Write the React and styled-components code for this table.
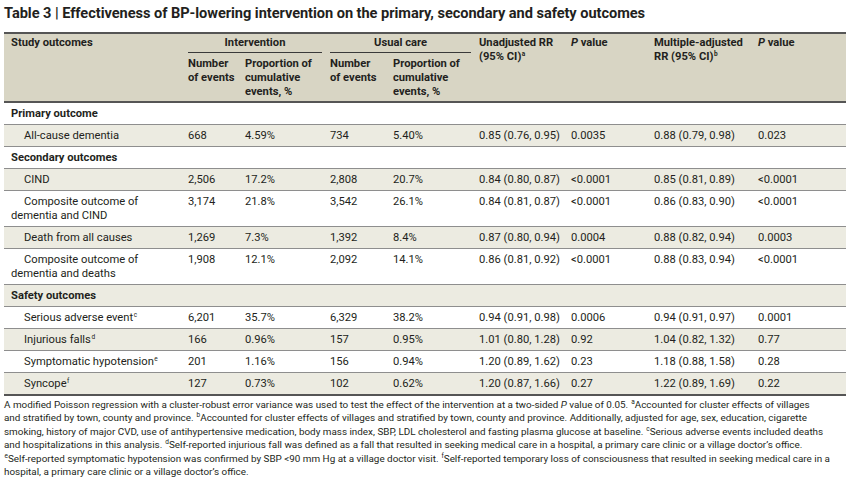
import React from "react";
import styled, { createGlobalStyle } from "styled-components";

const GlobalStyle = createGlobalStyle`
  html, body {
    margin: 0;
    padding: 0;
    background: #ffffff;
  }
  body {
    font-family: Roboto, "Liberation Sans", sans-serif;
    color: #231f20;
  }
`;

const Page = styled.div`
  width: 850px;
  padding: 4px 4px 0 4px;
  box-sizing: border-box;
`;

const Title = styled.h1`
  margin: 0 0 10px;
  font-size: 14.6px;
  line-height: 18px;
  font-weight: 700;
  letter-spacing: -0.05px;
  white-space: nowrap;
`;

const Table = styled.table`
  width: 842px;
  border-collapse: collapse;
  table-layout: fixed;
  border-top: 2px solid #555555;
  border-bottom: 2px solid #555555;
  font-size: 11.2px;
  line-height: 14px;
`;

const Head = styled.thead`
  background: #d8d5c4;
  border-bottom: 2px solid #555555;
`;

const Th = styled.th`
  text-align: left;
  vertical-align: top;
  font-weight: 700;
  padding: ${(p) => (p.$low ? "4px 0 2px 7px" : "2px 0 2px 7px")};
  white-space: nowrap;
`;

const SpanTh = styled.th`
  font-weight: 700;
  padding: 2px 1px 0 7px;
  vertical-align: top;
`;

const SpanLabel = styled.div`
  text-align: center;
  border-bottom: 1px solid #3a3a3a;
  padding-bottom: 2px;
`;

const Body = styled.tbody`
  tr:nth-child(even) {
    background: #ecebe1;
  }
  tr + tr {
    border-top: 1px solid #8e8e8e;
  }
`;

const GroupCell = styled.td`
  font-weight: 700;
  padding: 4px 7px 3px;
`;

const LabelCell = styled.td`
  padding: 4px 7px 3px;
  vertical-align: top;
  white-space: nowrap;
`;

const Indent = styled.span`
  display: inline-block;
  width: 13px;
`;

const Td = styled.td`
  padding: 4px 0 3px 7px;
  vertical-align: top;
  white-space: nowrap;
`;

const Sup = styled.sup`
  font-size: 6.5px;
  line-height: 0;
  vertical-align: 4px;
  margin-left: 0.5px;
`;

const Notes = styled.div`
  margin-top: 2px;
  font-size: 9.9px;
  line-height: 13.4px;
`;

const NoteLine = styled.div`
  white-space: nowrap;
`;

const rows = [
  { group: "Primary outcome" },
  { label: ["All-cause dementia"], v: ["668", "4.59%", "734", "5.40%", "0.85 (0.76, 0.95)", "0.0035", "0.88 (0.79, 0.98)", "0.023"] },
  { group: "Secondary outcomes" },
  { label: ["CIND"], v: ["2,506", "17.2%", "2,808", "20.7%", "0.84 (0.80, 0.87)", "<0.0001", "0.85 (0.81, 0.89)", "<0.0001"] },
  { label: ["Composite outcome of", "dementia and CIND"], v: ["3,174", "21.8%", "3,542", "26.1%", "0.84 (0.81, 0.87)", "<0.0001", "0.86 (0.83, 0.90)", "<0.0001"] },
  { label: ["Death from all causes"], v: ["1,269", "7.3%", "1,392", "8.4%", "0.87 (0.80, 0.94)", "0.0004", "0.88 (0.82, 0.94)", "0.0003"] },
  { label: ["Composite outcome of", "dementia and deaths"], v: ["1,908", "12.1%", "2,092", "14.1%", "0.86 (0.81, 0.92)", "<0.0001", "0.88 (0.83, 0.94)", "<0.0001"] },
  { group: "Safety outcomes" },
  { label: ["Serious adverse event"], sup: "c", v: ["6,201", "35.7%", "6,329", "38.2%", "0.94 (0.91, 0.98)", "0.0006", "0.94 (0.91, 0.97)", "0.0001"] },
  { label: ["Injurious falls"], sup: "d", v: ["166", "0.96%", "157", "0.95%", "1.01 (0.80, 1.28)", "0.92", "1.04 (0.82, 1.32)", "0.77"] },
  { label: ["Symptomatic hypotension"], sup: "e", v: ["201", "1.16%", "156", "0.94%", "1.20 (0.89, 1.62)", "0.23", "1.18 (0.88, 1.58)", "0.28"] },
  { label: ["Syncope"], sup: "f", v: ["127", "0.73%", "102", "0.62%", "1.20 (0.87, 1.66)", "0.27", "1.22 (0.89, 1.69)", "0.22"] },
];

const widths = [177, 57, 85, 63, 86, 92, 83, 104, 95];

export default function App() {
  return (
    <Page>
      <GlobalStyle />
      <Title>
        Table 3 | Effectiveness of BP-lowering intervention on the primary, secondary and safety outcomes
      </Title>
      <Table>
        <colgroup>
          {widths.map((w, i) => (
            <col key={i} style={{ width: w }} />
          ))}
        </colgroup>
        <Head>
          <tr>
            <Th rowSpan={2}>Study outcomes</Th>
            <SpanTh colSpan={2}>
              <SpanLabel>Intervention</SpanLabel>
            </SpanTh>
            <SpanTh colSpan={2}>
              <SpanLabel>Usual care</SpanLabel>
            </SpanTh>
            <Th rowSpan={2}>
              Unadjusted RR
              <br />
              (95% CI)<Sup>a</Sup>
            </Th>
            <Th rowSpan={2}>
              <i>P</i> value
            </Th>
            <Th rowSpan={2}>
              Multiple-adjusted
              <br />
              RR (95% CI)<Sup>b</Sup>
            </Th>
            <Th rowSpan={2}>
              <i>P</i> value
            </Th>
          </tr>
          <tr>
            <Th $low>
              Number
              <br />
              of events
            </Th>
            <Th $low>
              Proportion of
              <br />
              cumulative
              <br />
              events, %
            </Th>
            <Th $low>
              Number
              <br />
              of events
            </Th>
            <Th $low>
              Proportion of
              <br />
              cumulative
              <br />
              events, %
            </Th>
          </tr>
        </Head>
        <Body>
          {rows.map((r, i) =>
            r.group ? (
              <tr key={i}>
                <GroupCell colSpan={9}>{r.group}</GroupCell>
              </tr>
            ) : (
              <tr key={i}>
                <LabelCell>
                  <Indent />
                  {r.label[0]}
                  {r.sup && <Sup>{r.sup}</Sup>}
                  {r.label[1] && (
                    <>
                      <br />
                      {r.label[1]}
                    </>
                  )}
                </LabelCell>
                {r.v.map((v, j) => (
                  <Td key={j}>{v}</Td>
                ))}
              </tr>
            )
          )}
        </Body>
      </Table>
      <Notes>
        <NoteLine>
          A modified Poisson regression with a cluster-robust error variance was used to test the effect of the intervention at a two-sided <i>P</i> value of 0.05. <Sup>a</Sup>Accounted for cluster effects of villages
        </NoteLine>
        <NoteLine>
          and stratified by town, county and province. <Sup>b</Sup>Accounted for cluster effects of villages and stratified by town, county and province. Additionally, adjusted for age, sex, education, cigarette
        </NoteLine>
        <NoteLine>
          smoking, history of major CVD, use of antihypertensive medication, body mass index, SBP, LDL cholesterol and fasting plasma glucose at baseline. <Sup>c</Sup>Serious adverse events included deaths
        </NoteLine>
        <NoteLine>
          and hospitalizations in this analysis. <Sup>d</Sup>Self-reported injurious fall was defined as a fall that resulted in seeking medical care in a hospital, a primary care clinic or a village doctor’s office.
        </NoteLine>
        <NoteLine>
          <Sup>e</Sup>Self-reported symptomatic hypotension was confirmed by SBP &lt;90 mm Hg at a village doctor visit. <Sup>f</Sup>Self-reported temporary loss of consciousness that resulted in seeking medical care in a
        </NoteLine>
        <NoteLine>hospital, a primary care clinic or a village doctor’s office.</NoteLine>
      </Notes>
    </Page>
  );
}
